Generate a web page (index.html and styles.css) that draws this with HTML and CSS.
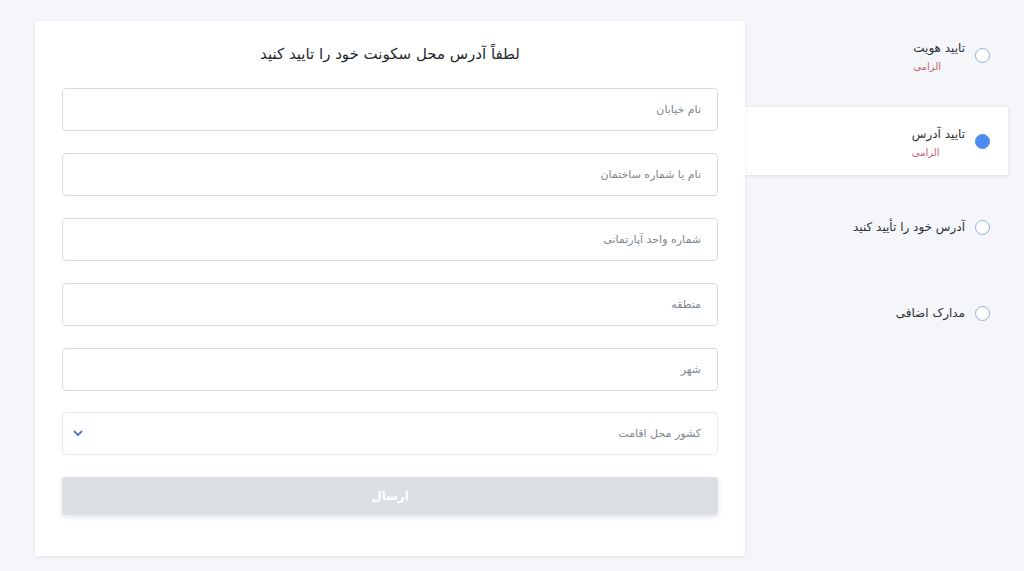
FILE: index.html
```html
<!DOCTYPE html>
<html lang="fa" dir="rtl">
<head>
<meta charset="utf-8">
<title>تایید آدرس</title>
<link rel="stylesheet" href="styles.css">
</head>
<body>
<div class="page">
  <aside class="steps">
    <div class="step">
      <span class="dot"></span>
      <div class="step-text two">
        <div class="step-title">تایید هویت</div>
        <div class="step-sub">الزامی</div>
      </div>
    </div>
    <div class="step active">
      <span class="dot"></span>
      <div class="step-text two">
        <div class="step-title">تایید آدرس</div>
        <div class="step-sub">الزامی</div>
      </div>
    </div>
    <div class="step">
      <span class="dot"></span>
      <div class="step-text">
        <div class="step-title">آدرس خود را تأیید کنید</div>
      </div>
    </div>
    <div class="step">
      <span class="dot"></span>
      <div class="step-text">
        <div class="step-title">مدارک اضافی</div>
      </div>
    </div>
  </aside>
  <main class="card">
    <h1 class="card-title">لطفاً آدرس محل سکونت خود را تایید کنید</h1>
    <form class="form">
      <input class="field" type="text" placeholder="نام خیابان">
      <input class="field" type="text" placeholder="نام یا شماره ساختمان">
      <input class="field" type="text" placeholder="شماره واحد آپارتمانی">
      <input class="field" type="text" placeholder="منطقه">
      <input class="field" type="text" placeholder="شهر">
      <div class="field select">
        <span class="select-text">کشور محل اقامت</span>
        <svg class="chev" width="10" height="7" viewBox="0 0 10 7"><path d="M1.5 1.5 L5 5 L8.5 1.5" fill="none" stroke="#4a7fc1" stroke-width="1.8" stroke-linecap="round" stroke-linejoin="round"/></svg>
      </div>
      <button class="submit" type="button" disabled>ارسال</button>
    </form>
  </main>
</div>
</body>
</html>
```
FILE: styles.css
```css
* { box-sizing: border-box; }
html, body { margin: 0; padding: 0; }
body {
  background: #f4f6f9;
  font-family: "DejaVu Sans", "Noto Sans", sans-serif;
  color: #2b2f36;
  width: 1024px;
  height: 571px;
  overflow: hidden;
}
.page {
  display: flex;
  flex-direction: row;
  align-items: flex-start;
  padding: 21px 0 0 35px;
}
.steps {
  width: 279px;
  padding-right: 16px;
  display: flex;
  flex-direction: column;
  gap: 18px;
}
.step {
  height: 68px;
  display: flex;
  align-items: center;
  gap: 10px;
  padding-right: 18px;
}
.step.active {
  background: #fff;
  box-shadow: 0 1px 4px rgba(30, 40, 60, 0.12);
}
.dot {
  width: 15px;
  height: 15px;
  border-radius: 50%;
  border: 1.5px solid #8eaedb;
  background: #fff;
  flex: none;
}
.step.active .dot {
  background: #4c8cf0;
  border-color: #4c8cf0;
}
.step-text.two { padding-top: 5px; }
.step-title {
  font-size: 12px;
  color: #2b2f36;
  line-height: 18px;
}
.step-sub {
  font-size: 10px;
  color: #c76470;
  line-height: 20px;
  text-align: left;
}
.card {
  width: 710px;
  height: 535px;
  background: #fff;
  box-shadow: 0 1px 4px rgba(30, 40, 60, 0.08);
  padding: 22px 27px 0;
}
.card-title {
  margin: 0;
  text-align: center;
  font-size: 15px;
  font-weight: normal;
  color: #23272e;
  line-height: 22px;
}
.form {
  margin-top: 23px;
  display: flex;
  flex-direction: column;
  gap: 22px;
}
.field {
  width: 656px;
  height: 43px;
  border: 1px solid #d7dbe1;
  border-radius: 4px;
  background: #fff;
  padding: 0 16px;
  font-family: inherit;
  font-size: 11px;
  color: #2b2f36;
  outline: none;
}
.field::placeholder {
  color: #80868e;
}
.select {
  display: flex;
  align-items: center;
  justify-content: space-between;
  border-color: #e7eaee;
  margin-top: -1px;
}
.select-text {
  color: #80868e;
  font-size: 11px;
}
.chev { display: block; margin-left: -6px; }
.submit {
  width: 656px;
  height: 38px;
  margin-top: 0;
  border: none;
  border-radius: 3px;
  background: #dcdfe3;
  color: #fff;
  font-family: inherit;
  font-size: 12px;
  font-weight: bold;
  box-shadow: 0 2px 5px rgba(30, 40, 60, 0.12);
}
```
